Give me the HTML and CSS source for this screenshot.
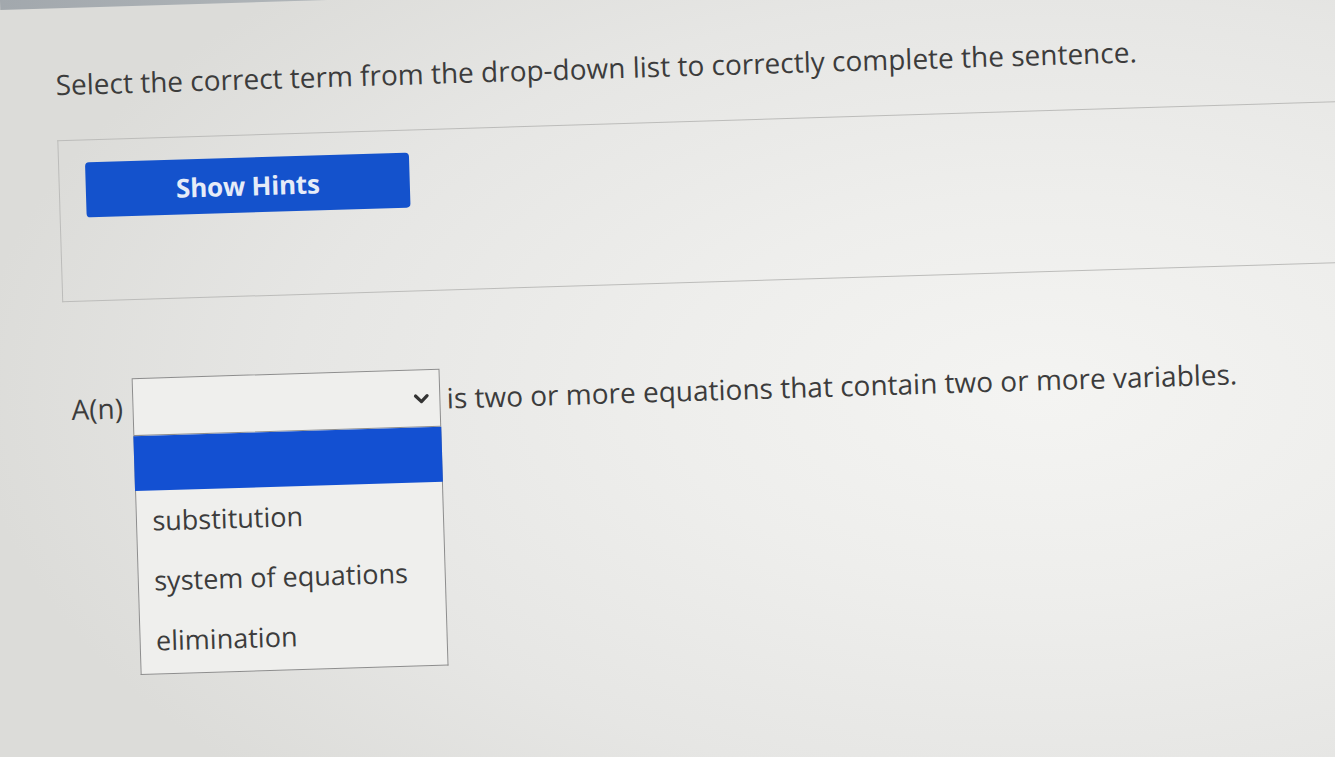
FILE: index.html
```html
<!DOCTYPE html>
<html lang="en">
<head>
<meta charset="utf-8">
<title>Select the correct term</title>
<link rel="stylesheet" href="styles.css">
</head>
<body>
<div class="page">
  <div class="topbar"></div>
  <main class="content">
    <h1 class="prompt">Select the correct term from the drop-down list to correctly complete the sentence.</h1>
    <section class="hints">
      <button class="hint-btn" type="button">Show Hints</button>
    </section>
    <div class="sentence">
      <span class="label">A(n)</span>
      <div class="select-wrap">
        <div class="select">
          <svg class="chevron" viewBox="0 0 16 11" width="16" height="11" aria-hidden="true">
            <path d="M2.2 2.5 L8 8.3 L13.8 2.5" fill="none" stroke="#333" stroke-width="3.2" stroke-linecap="round" stroke-linejoin="round"/>
          </svg>
        </div>
        <ul class="options">
          <li class="opt-blank"></li>
          <li class="opt">substitution</li>
          <li class="opt">system of equations</li>
          <li class="opt">elimination</li>
        </ul>
      </div>
      <span class="rest">is two or more equations that contain two or more variables.</span>
    </div>
  </main>
</div>
</body>
</html>
```
FILE: styles.css
```css
html, body {
  margin: 0;
  height: 100%;
  overflow: hidden;
}

body {
  background:
    radial-gradient(ellipse 80% 75% at 78% 52%, #f4f4f2 0%, #eeeeec 35%, #e6e6e4 70%, #dcdcd9 100%);
  font-family: "Open Sans", Lato, "Liberation Sans", sans-serif;
  color: #3b3b3b;
}

/* whole sheet sits slightly tilted */
.page {
  width: 1440px;
  height: 820px;
  transform: rotate(-1.75deg);
  transform-origin: 0 0;
}

.topbar {
  height: 10px;
  background: linear-gradient(90deg, #a2a8ad 0%, #b5babd 30%, #c8cacc 55%, rgba(225, 225, 225, 0) 80%);
}

.content {
  padding-left: 53px;
}

.prompt {
  margin: 58px 0 0;
  font-size: 28px;
  font-weight: 400;
  line-height: 36px;
  color: #3c3c3c;
}

.hints {
  margin-top: 38px;
  border: 1px solid #bcbcba;
  border-right: none;
  padding: 22px 0 83px 26px;
}

.hint-btn {
  display: block;
  width: 324px;
  height: 55px;
  border: none;
  border-radius: 4px;
  background: #1452cc;
  color: #e6ecf8;
  font-family: "Open Sans", Lato, sans-serif;
  font-size: 26px;
  font-weight: 700;
  letter-spacing: -0.2px;
  cursor: pointer;
}

.sentence {
  display: flex;
  align-items: center;
  margin-top: 78px;
  margin-left: 6px;
  font-size: 28px;
  color: #3c3c3c;
}

.label {
  margin-right: 10px;
}

.select-wrap {
  position: relative;
  width: 308px;
  flex: none;
}

.select {
  box-sizing: border-box;
  height: 58px;
  border: 1px solid #8d8d8d;
  background: #efefed;
  display: flex;
  align-items: center;
  justify-content: flex-end;
  padding-right: 10px;
}

.chevron {
  display: block;
}

/* open option list drawn over the page */
.options {
  position: absolute;
  top: 100%;
  left: 0;
  right: 0;
  margin: 0;
  padding: 0 0 3px;
  list-style: none;
  border: 1px solid #8d8d8d;
  border-top: none;
  background: #efefed;
  font-size: 27px;
}

.opt-blank {
  height: 55px;
  background: #1350d2;
  margin: 0 -1px;
}

.opt {
  height: 60px;
  line-height: 60px;
  padding-left: 15px;
}

.rest {
  margin-left: 6px;
  white-space: nowrap;
}
```
